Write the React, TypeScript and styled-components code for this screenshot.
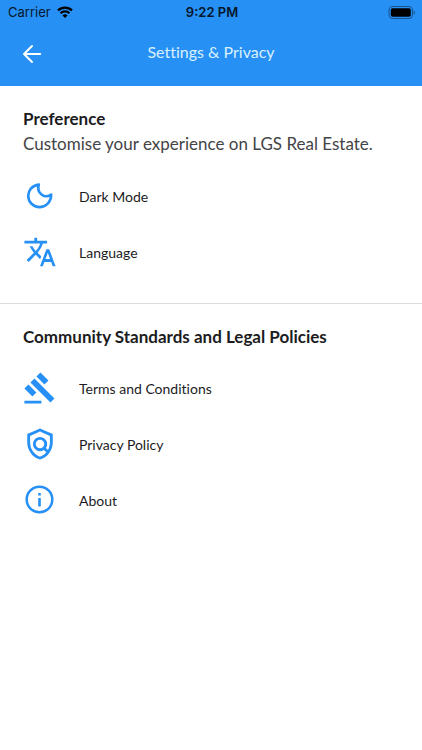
import React from "react";
import styled, { createGlobalStyle } from "styled-components";
import { MdTranslate, MdGavel, MdOutlinePolicy } from "react-icons/md";

const GlobalStyle = createGlobalStyle`
  *, *::before, *::after { box-sizing: border-box; }
  body {
    margin: 0;
    background: #ffffff;
    color: #1c1c1e;
    font-family: Lato, "Open Sans", sans-serif;
    font-variant-ligatures: none;
  }
  h1, h2, p, ul { margin: 0; padding: 0; }
`;

const Header = styled.header`
  background: #2790f5;
`;

const StatusBar = styled.div`
  display: grid;
  grid-template-columns: 1fr auto 1fr;
  align-items: center;
  height: 24px;
  padding: 0 6px 0 8px;
  color: #06162b;
  font: 400 13px/24px Inter, sans-serif;
`;

const Carrier = styled.span`
  display: flex;
  align-items: center;
  gap: 6px;
`;

const Clock = styled.time`
  font-weight: 600;
`;

const Battery = styled.svg`
  justify-self: end;
`;

const NavBar = styled.div`
  display: grid;
  grid-template-columns: 48px 1fr 48px;
  align-items: center;
  height: 62px;
  padding: 0 8px 2px;
`;

const BackButton = styled.button`
  display: flex;
  align-items: center;
  justify-content: center;
  height: 48px;
  padding: 0;
  border: 0;
  background: none;
  color: #ffffff;
  cursor: pointer;
`;

const Title = styled.h1`
  color: #d9f0ff;
  font-size: 16px;
  font-weight: 400;
  line-height: 24px;
  padding-bottom: 4px;
  text-align: center;
`;

const Section = styled.section`
  padding: 20px 23px 23px;

  & + & {
    border-top: 1px solid #dcdcdc;
  }
`;

const Heading = styled.h2`
  font-size: 17px;
  font-weight: 700;
  line-height: 26px;
`;

const Description = styled.p`
  color: #444446;
  font-size: 17px;
  line-height: 24px;
`;

const List = styled.ul`
  padding-top: 12px;
  list-style: none;

  ${Heading} + & {
    padding-top: 10px;
  }
`;

const Row = styled.button`
  display: flex;
  align-items: center;
  gap: 22px;
  width: 100%;
  height: 56px;
  padding: 0;
  border: 0;
  background: none;
  color: #1c1c1e;
  font: inherit;
  font-size: 14px;
  text-align: left;
  cursor: pointer;

  svg {
    flex: none;
    color: #2790f5;
  }
`;

type IconProps = { size: number };

function MoonIcon({ size }: IconProps) {
  return (
    <svg width={size} height={size} viewBox="0 0 34 34" aria-hidden>
      <path
        d="M15.8 5.6C8.800 6.500 5.200 11.700 5.200 16.800A11.300 11.300 0 0 0 16.500 28.100C22.500 28.100 28 23.500 28.200 15.600C21.500 20.200 13.200 13.800 15.800 5.600z"
        fill="none"
        stroke="currentColor"
        strokeWidth="2.6"
        strokeLinejoin="round"
      />
    </svg>
  );
}

function InfoIcon({ size }: IconProps) {
  return (
    <svg width={size} height={size} viewBox="0 0 34 34" aria-hidden>
      <circle cx="16.5" cy="16.500" r="12.800" fill="none" stroke="currentColor" strokeWidth="2.5" />
      <path d="M15.200 15h2.600v8.500h-2.600zM15.200 10h2.600v2.600h-2.600z" fill="currentColor" />
    </svg>
  );
}

type Item = { label: string; icon: React.ComponentType<IconProps> };

const preferences: Item[] = [
  { label: "Dark Mode", icon: MoonIcon },
  { label: "Language", icon: MdTranslate },
];

const policies: Item[] = [
  { label: "Terms and Conditions", icon: MdGavel },
  { label: "Privacy Policy", icon: MdOutlinePolicy },
  { label: "About", icon: InfoIcon },
];

function Items({ items }: { items: Item[] }) {
  return (
    <List>
      {items.map(({ label, icon: Icon }) => (
        <li key={label}>
          <Row type="button">
            <Icon size={34} aria-hidden />
            {label}
          </Row>
        </li>
      ))}
    </List>
  );
}

export default function App() {
  return (
    <>
      <GlobalStyle />
      <Header>
        <StatusBar>
          <Carrier>
            Carrier
            <svg width="16" height="12" viewBox="0 0 16 12" aria-label="Wi-Fi">
              <g fill="none" stroke="#000000" strokeWidth="2.3">
                <path d="M1 4.4a10 10 0 0 1 14 0" />
                <path d="M3.6 7.2a6.3 6.3 0 0 1 8.8 0" />
              </g>
              <path d="M8 12 5.5 9.4a3.6 3.6 0 0 1 5 0z" fill="#000000" />
            </svg>
          </Carrier>
          <Clock>9:22 PM</Clock>
          <Battery width="28" height="13" viewBox="0 0 28 13" aria-label="Battery full">
            <rect x="1" y="0.5" width="23.5" height="12" rx="3.5" fill="none" stroke="#17558f" />
            <rect x="2.8" y="2.3" width="20" height="8.4" rx="1.8" fill="#000000" />
            <path d="M25.6 4.5c1.8.6 1.8 3.4 0 4z" fill="#17558f" />
          </Battery>
        </StatusBar>
        <NavBar>
          <BackButton type="button" aria-label="Back">
            <svg width="20" height="20" viewBox="0 0 20 20" aria-hidden>
              <path
                d="M18.2 10H2M10 2 2 10l8 8"
                fill="none"
                stroke="currentColor"
                strokeWidth="2"
                strokeLinecap="round"
                strokeLinejoin="round"
              />
            </svg>
          </BackButton>
          <Title>Settings &amp; Privacy</Title>
        </NavBar>
      </Header>
      <main>
        <Section>
          <Heading>Preference</Heading>
          <Description>Customise your experience on LGS Real Estate.</Description>
          <Items items={preferences} />
        </Section>
        <Section>
          <Heading>Community Standards and Legal Policies</Heading>
          <Items items={policies} />
        </Section>
      </main>
    </>
  );
}
